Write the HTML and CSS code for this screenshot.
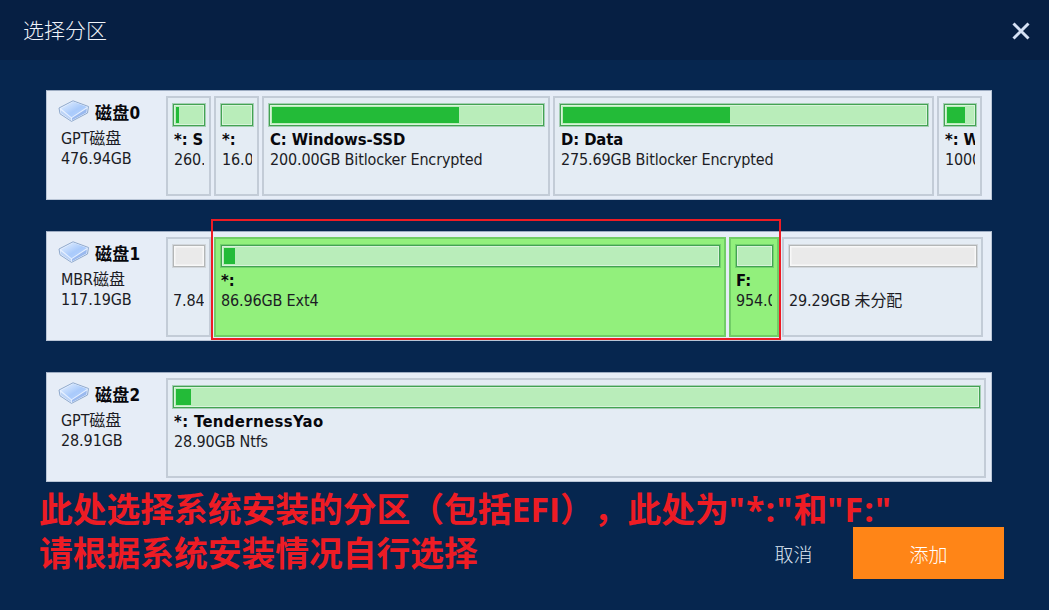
FILE: index.html
```
<!DOCTYPE html>
<html lang="zh-CN">
<head>
<meta charset="utf-8">
<title>选择分区</title>
<link rel="stylesheet" href="styles.css">
</head>
<body>
<svg class="defs" width="0" height="0" aria-hidden="true">
  <defs>
    <linearGradient id="face" x1="0" y1="0" x2="1" y2="1">
      <stop offset="0" stop-color="#e8f2ff"/><stop offset=".55" stop-color="#a9cafb"/><stop offset="1" stop-color="#b8d4ff"/>
    </linearGradient>
    <symbol id="disk" viewBox="0 0 32 22">
      <path d="M1 8 L15 .8 L30.5 6.5 L29.5 13 L13.5 21.4 L2 13.8Z" fill="#e6f0ff" stroke="#8fa9cc" stroke-width="1" stroke-linejoin="round"/>
      <path d="M3 8.5 L15.3 1.8 L29 7 L13.5 17.2Z" fill="url(#face)"/>
      <path d="M2.6 10 L13 17.9 L13.3 20.2 L3 13.3Z" fill="#bcd3f6"/>
      <path d="M14 17.9 L28.8 8.6 L28.4 12.4 L14 20.2Z" fill="#9ab9ee"/>
    </symbol>
  </defs>
</svg>
<div class="dialog">
  <header class="titlebar">
    <h1 class="title">选择分区</h1>
    <svg class="close" viewBox="0 0 18 18"><path d="M1.5 1.5 L16.5 16.5 M16.5 1.5 L1.5 16.5"/></svg>
  </header>
  <main class="disks">
    <section class="disk">
      <div class="info">
        <div class="name"><svg class="icon"><use href="#disk"/></svg><b>磁盘0</b></div>
        <div class="line">GPT磁盘</div><div class="line size">476.94GB</div>
      </div>
      <div class="parts p0">
        <div class="part"><div class="bar"><i style="width:3px"></i></div><b class="label">*: S</b><span class="detail">260.</span></div>
        <div class="part"><div class="bar"></div><b class="label">*:</b><span class="detail">16.0</span></div>
        <div class="part"><div class="bar"><i style="width:187px"></i></div><b class="label">C: Windows-SSD</b><span class="detail">200.00GB Bitlocker Encrypted</span></div>
        <div class="part"><div class="bar"><i style="width:167px"></i></div><b class="label">D: Data</b><span class="detail">275.69GB Bitlocker Encrypted</span></div>
        <div class="part"><div class="bar"><i style="width:18px"></i></div><b class="label">*: W</b><span class="detail">1000</span></div>
      </div>
    </section>
    <section class="disk">
      <div class="info">
        <div class="name"><svg class="icon"><use href="#disk"/></svg><b>磁盘1</b></div>
        <div class="line">MBR磁盘</div><div class="line size">117.19GB</div>
      </div>
      <div class="parts p1">
        <div class="part free"><div class="bar"></div><b class="label"></b><span class="detail">7.84</span></div>
        <div class="part on"><div class="bar"><i style="width:11px"></i></div><b class="label">*:</b><span class="detail">86.96GB Ext4</span></div>
        <div class="part on"><div class="bar"></div><b class="label">F:</b><span class="detail">954.0</span></div>
        <div class="part free"><div class="bar"></div><b class="label"></b><span class="detail">29.29GB 未分配</span></div>
      </div>
      <div class="highlight"></div>
    </section>
    <section class="disk">
      <div class="info">
        <div class="name"><svg class="icon"><use href="#disk"/></svg><b>磁盘2</b></div>
        <div class="line">GPT磁盘</div><div class="line size">28.91GB</div>
      </div>
      <div class="parts p2">
        <div class="part"><div class="bar"><i style="width:15px"></i></div><b class="label wide">*: TendernessYao</b><span class="detail">28.90GB Ntfs</span></div>
      </div>
    </section>
  </main>
  <footer class="actions">
    <button class="btn">取消</button>
    <button class="btn primary">添加</button>
  </footer>
  <p class="note">此处选择系统安装的分区（包括EFI），此处为<span class="quoted">"*:"</span>和<span class="quoted">"F:"</span><br>请根据系统安装情况自行选择</p>
</div>
</body>
</html>
```
FILE: styles.css
```
* { box-sizing: border-box; }
body { margin: 0; background: #06264f; font-family: "DejaVu Sans Condensed", "DejaVu Sans", "Noto Sans CJK SC", sans-serif; font-stretch: condensed; }
.defs { position: absolute; }
.dialog { position: relative; width: 1049px; height: 610px; overflow: hidden; background: #06264f; }
.titlebar { height: 60px; padding: 0 19px 0 23px; display: flex; align-items: center; justify-content: space-between; background: #061f43; }
.title { margin: 0; font: 300 21px/58px "Noto Sans CJK SC", sans-serif; height: 60px; color: #f0f4fa; }
.close { width: 18px; height: 18px; fill: none; stroke: #d5e1f5; stroke-width: 3; margin-top: 2px; }
.disks { padding: 30px 0 0 46px; display: flex; flex-direction: column; gap: 31px; }
.disk { position: relative; width: 946px; height: 110px; display: flex; background: #e6edf7; border: 1px solid #b9c5d6; border-top-color: #9dacc2; }
.info { width: 119px; flex: none; padding: 9px 0 0 11px; color: #1c1c24; }
.name { display: flex; height: 29px; align-items: flex-start; gap: 5px; }
.name b { font-size: 17px; line-height: 27px; color: #08080c; letter-spacing: .3px; }
.icon { width: 32px; height: 22px; }
.line { padding-left: 3px; font-size: 16px; line-height: 20px; height: 20px; letter-spacing: -.1px; white-space: nowrap; }
.parts { display: grid; gap: 4px; margin-top: 5px; height: 100px; }
.p0 { grid-template-columns: 45px 45px 288px 381px 45px; gap: 3px; }
.p1 { grid-template-columns: 45px 512px 50px 201px; gap: 3px; }
.p2 { grid-template-columns: 820px; }
.part { min-width: 0; border: 2px solid #c3ccd7; background: #e4ecf4; padding: 4px; overflow: hidden; }
.bar { height: 22px; margin: 2px 0 0 1px; padding: 2px; border: 1px solid #43a353; background: #b9edba; box-shadow: inset 0 0 0 1px #d9f3db, 0 0 0 1px #43a35366; }
.bar i { display: block; height: 100%; background: #23bb38; }
.free .bar { border-color: #b3b6b6; background: #eaeaea; box-shadow: inset 0 0 0 1.5px #f8f8f8, 0 0 0 1px #b3b6b666; }
.on { background: #92f07c; border-color: #71cd66; }
.label, .detail { display: block; overflow: hidden; white-space: nowrap; height: 20px; line-height: 20px; margin-left: 2px; margin-right: 1px; }
.label { margin-top: 4px; font-size: 16.5px; color: #08080c; letter-spacing: -.1px; }
.wide { letter-spacing: .4px; }
.detail { font-size: 16px; color: #1c1c24; letter-spacing: -.15px; }
.p1 .detail, .p1 .label { margin-left: 1px; }
.highlight { position: absolute; left: 164px; top: -13px; width: 570px; height: 121px; border: 2px solid #ed1c24; }
.actions { display: flex; justify-content: flex-end; padding: 45px 45px 0 0; }
.btn { width: 119px; height: 52px; border: 0; padding: 0; background: none; font: 300 19px/51px "Noto Sans CJK SC", sans-serif; color: #dbe4f0; }
.primary { width: 151px; background: #ff8517; color: #fff; }
.note { position: absolute; left: 39px; top: 487px; margin: 0; font: bold 33.75px/44px "Open Sans", "Noto Sans CJK SC", sans-serif; text-spacing-trim: space-all; color: #ed1c24; white-space: nowrap; }
.quoted { letter-spacing: 1.2px; }
```
